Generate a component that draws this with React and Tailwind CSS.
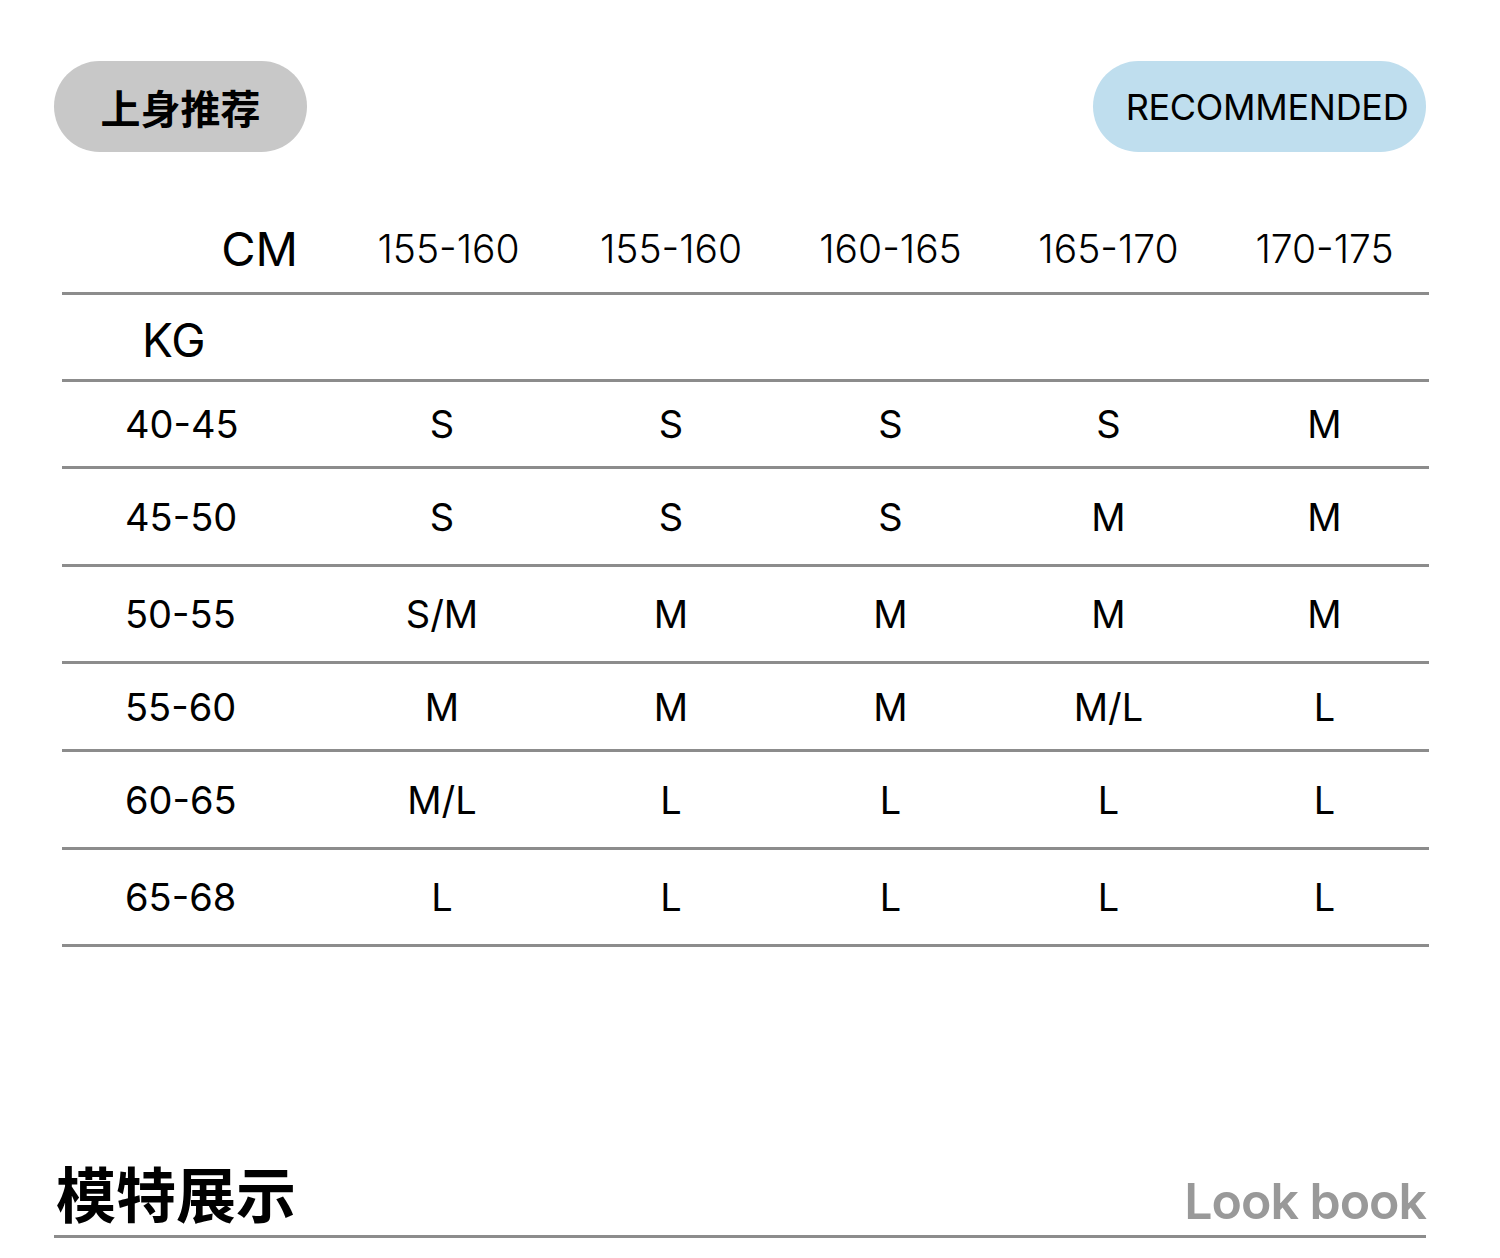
import React from "react";

const cols = ["w-[273px]", "w-[223px]", "w-[222px]", "w-[217px]", "w-[219px]", "w-[213px]"];
const heights = ["h-[87px]", "h-[98px]", "h-[97px]", "h-[88px]", "h-[98px]", "h-[97px]"];
const rows = [
  ["40-45", "S", "S", "S", "S", "M"],
  ["45-50", "S", "S", "S", "M", "M"],
  ["50-55", "S/M", "M", "M", "M", "M"],
  ["55-60", "M", "M", "M", "M/L", "L"],
  ["60-65", "M/L", "L", "L", "L", "L"],
  ["65-68", "L", "L", "L", "L", "L"],
];
const heads = ["155-160", "155-160", "160-165", "165-170", "170-175"];
const latin = "font-['Inter','Liberation_Sans',sans-serif]";
const cjk = "font-['Noto_Sans_CJK_SC',sans-serif]";

export default function App() {
  return (
    <div className={`w-[1500px] h-[1258px] bg-white overflow-hidden flex flex-col text-black ${latin}`}>
      <div className="flex justify-between pl-[54px] pr-[74px] pt-[61px]">
        <div className={`h-[91px] w-[253px] rounded-full bg-[#c8c8c8] flex items-center justify-center ${cjk} text-[40px] font-bold leading-none`}>
          上身推荐
        </div>
        <div className="h-[91px] w-[333px] rounded-full bg-[#bfdeee] flex items-center justify-center pl-[15px] text-[36px] leading-none tracking-[-0.3px]">
          RECOMMENDED
        </div>
      </div>

      <div className="mt-[53px] mx-[62px] w-[1367px]">
        <div className="flex h-[90px] items-center border-b-[3px] border-[#8c8c8c]">
          <div className={`${cols[0]} text-right pr-[37px] text-[47px] leading-none`}>CM</div>
          {heads.map((h, i) => (
            <div key={i} className={`${cols[i + 1]} text-center pl-[4px] text-[39px] font-light leading-none`}>{h}</div>
          ))}
        </div>
        <div className="flex h-[87px] items-center border-b-[3px] border-[#8c8c8c]">
          <div className="pl-[80px] pt-[6px] text-[46px] leading-none">KG</div>
        </div>
        {rows.map((r, ri) => (
          <div key={ri} className={`flex ${heights[ri]} items-center border-b-[3px] border-[#8c8c8c]`}>
            {r.map((c, ci) => (
              <div
                key={ci}
                className={`${cols[ci]} ${ci === 0 ? "pl-[63px] text-left" : ci === 1 ? "text-center pr-[9px]" : "text-center pl-[4px]"} text-[38px] leading-none`}
              >
                {c}
              </div>
            ))}
          </div>
        ))}
      </div>

      <div className="mt-auto mb-[20px] ml-[54px] mr-[74px] flex justify-between items-end border-b-[3px] border-[#8c8c8c] pb-[6px]">
        <div className={`${cjk} text-[60px] font-bold leading-none pl-[2px] pb-[7px]`}>模特展示</div>
        <div className="text-[50px] font-semibold text-[#999999] leading-none tracking-[-1px] pb-[3px]">Look book</div>
      </div>
    </div>
  );
}
